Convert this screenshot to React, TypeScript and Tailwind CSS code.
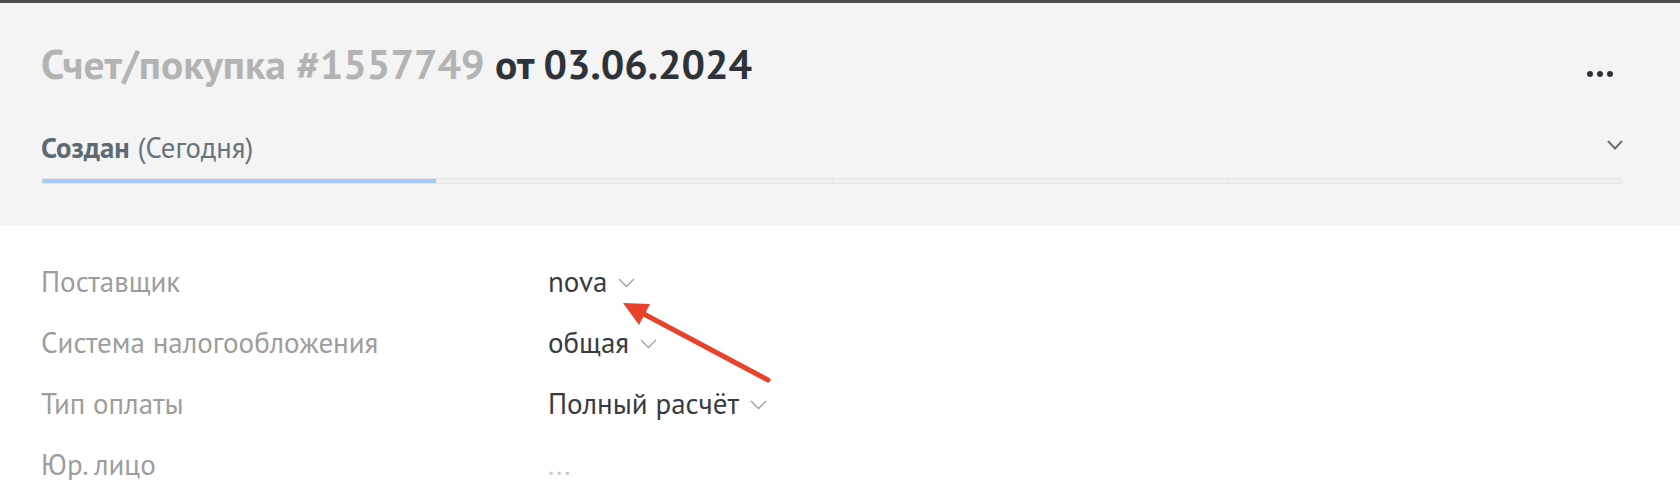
import React from "react";

const FONT = { fontFamily: '"Liberation Sans Narrow", "PT Sans", Roboto, sans-serif' };

function SmallChevron() {
  return (
    <svg width="17" height="10" viewBox="0 0 17 10" className="ml-[11px] mt-[2px]">
      <path d="M1 1 L8.5 8.5 L16 1" fill="none" stroke="#9ba4aa" strokeWidth="1.4" />
    </svg>
  );
}

function Row({ label, value, muted }: { label: string; value: string; muted?: boolean }) {
  return (
    <div className="flex h-[61px] items-center">
      <div className="w-[507px] text-[29px] text-[#9d9d9d]">{label}</div>
      <div className="flex items-center">
        {muted ? (
          <span className="text-[29px] text-[#c9c9c9]">...</span>
        ) : (
          <>
            <span className="text-[29px] text-[#363b41]">{value}</span>
            <SmallChevron />
          </>
        )}
      </div>
    </div>
  );
}

export default function App() {
  return (
    <div className="relative h-[480px] w-[1680px] overflow-hidden bg-white" style={FONT}>
      <div className="border-t-[3px] border-[#4e4e4e] bg-[#f4f4f4] pl-[41px] pr-[57px] pt-[35px] pb-[42px]">
        <div className="flex items-start justify-between">
          <h1 className="text-[41.5px] font-bold leading-[52px]">
            <span className="text-[#b3b3b3]">Счет/покупка #1557749</span>{" "}
            <span className="text-[#2e333a]">от 03.06.2024</span>
          </h1>
          <svg width="26" height="6" viewBox="0 0 26 6" className="mr-[10px] mt-[33px]">
            <circle cx="3" cy="3" r="3" fill="#2e333a" />
            <circle cx="13" cy="3" r="3" fill="#2e333a" />
            <circle cx="23" cy="3" r="3" fill="#2e333a" />
          </svg>
        </div>
        <div className="mt-[40px] flex items-start justify-between">
          <div className="text-[28.7px] leading-[36px] text-[#66737c]">
            <span className="font-bold text-[#5d6a73]">Создан</span> (Сегодня)
          </div>
          <svg width="16" height="10" viewBox="0 0 16 10" className="mt-[10px]">
            <path d="M1 1 L8 8.5 L15 1" fill="none" stroke="#66737c" strokeWidth="2" />
          </svg>
        </div>
        <div className="mt-[12px] flex h-[6px] overflow-hidden rounded-full border border-[#e5e5e5] bg-[#efefef]">
          <div className="flex-1 bg-[#a4c8f8]" />
          <div className="flex-1 border-l border-[#e2e2e2]" />
          <div className="flex-1 border-l border-[#e2e2e2]" />
          <div className="flex-1 border-l border-[#e2e2e2]" />
        </div>
      </div>
      <div className="pl-[41px] pt-[25px]">
        <Row label="Поставщик" value="nova" />
        <Row label="Система налогообложения" value="общая" />
        <Row label="Тип оплаты" value="Полный расчёт" />
        <Row label="Юр. лицо" value="" muted />
      </div>
      <svg
        className="pointer-events-none absolute left-0 top-0"
        width="1680"
        height="480"
        viewBox="0 0 1680 480"
      >
        <line x1="768" y1="380" x2="642" y2="313" stroke="#e8412c" strokeWidth="5" strokeLinecap="round" />
        <polygon points="623,303 650,304 639,325" fill="#e8412c" />
      </svg>
    </div>
  );
}
